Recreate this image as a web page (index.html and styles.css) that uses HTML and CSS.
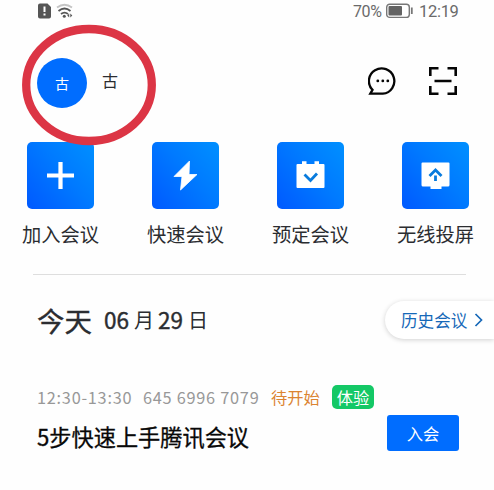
FILE: index.html
```html
<!DOCTYPE html>
<html lang="zh-CN">
<head>
<meta charset="utf-8">
<title>会议</title>
<link rel="stylesheet" href="styles.css">
</head>
<body>
<div class="status">
  <svg class="sim" width="14" height="16" viewBox="0 0 14 16"><path d="M2 .5h7.500L13 4v9.500a2 2 0 0 1-2 2H2a2 2 0 0 1-2-2v-11a2 2 0 0 1 2-2z" fill="#555"/><path d="M6.500 3.500v5.500M6.500 10.500v2" stroke="#fff" stroke-width="2"/></svg>
  <svg class="wifi" width="18" height="16" viewBox="0 0 18 16" fill="none"><path d="M1 4.500Q8.500-1 16 4.500" stroke="#c4c4c4" stroke-width="1.800"/><path d="M2.500 8Q8.500 3 14.500 8M5 11q3.500-2.700 7 0" stroke="#555" stroke-width="1.800"/><circle cx="8.300" cy="13.300" r="1.500" fill="#555"/><path d="m13.200 10.500-2 2 2 2zM14.300 10.500l2 2-2 2z" fill="#555"/></svg>
  <span class="percent">70%</span>
  <svg class="battery" width="28" height="16" viewBox="0 0 28 16"><rect x=".7" y="1.200" width="22.600" height="13.200" rx="3" fill="#fff" stroke="#777" stroke-width="1.400"/><rect x="2.500" y="3" width="13.500" height="9.600" rx="1" fill="#636363"/><path d="M25.800 4.500v6.500" stroke="#777" stroke-width="1.800"/></svg>
  <span class="clock">12:19</span>
</div>
<header class="header">
  <div class="avatar">古</div>
  <div class="username">古</div>
  <svg class="chat" width="30" height="30" viewBox="0 0 30 30"><path d="M2.300 27.700 4.500 23.900A12.700 12.700 0 1 1 14.800 27.700z" fill="none" stroke="#050505" stroke-width="2.300"/><g fill="#050505"><circle cx="9.800" cy="14.900" r="1.400"/><circle cx="14.800" cy="14.900" r="1.400"/><circle cx="19.800" cy="14.900" r="1.400"/></g></svg>
  <svg class="scan" width="30" height="30" viewBox="0 0 30 30" fill="none" stroke="#050505" stroke-width="2.600"><path d="M2.300 10V2.300H10.500M19.500 2.300h8.200V10M27.700 20v7.700h-8.200M10.500 27.700H2.300V20M6.500 15h17"/></svg>
  <svg class="mark" width="138" height="124" viewBox="0 0 138 124"><ellipse cx="69" cy="62" rx="62.800" ry="56" fill="none" stroke="#dc3545" stroke-width="8.300"/></svg>
</header>
<nav class="actions">
  <div class="action"><div class="tile"><svg width="67" height="67" viewBox="0 0 67 67"><path d="M33.500 20v27M20 33.500h27" stroke="#fff" stroke-width="4.200"/></svg></div><span>加入会议</span></div>
  <div class="action"><div class="tile"><svg width="67" height="67" viewBox="0 0 67 67"><path d="M37.500 19 22 34.500h8L28.500 48 45 32.500h-8z" fill="#fff" stroke="#fff" stroke-width=".8"/></svg></div><span>快速会议</span></div>
  <div class="action"><div class="tile"><svg width="67" height="67" viewBox="0 0 67 67"><path d="M20.500 22H25v-2.700h4.500V22h8v-2.700H42V22h4.500q1 0 1 1v22q0 1-1 1h-26q-1 0-1-1V23q0-1 1-1z" fill="#fff"/><path d="m27.500 32.500 6 6 6.500-7" fill="none" stroke="#087bdd" stroke-width="2.800"/></svg></div><span>预定会议</span></div>
  <div class="action"><div class="tile"><svg width="67" height="67" viewBox="0 0 67 67"><path d="M20.500 20.500h26q1 0 1 1V43q0 1.500-1.500 1.500h-6.500V47h-11v-2.500h-7.500q-1.500 0-1.500-1.500V21.500q0-1 1-1z" fill="#fff"/><path d="m27.500 34 6-6 6 6M33.500 33.500V39" fill="none" stroke="#087bdd" stroke-width="2.800"/></svg></div><span>无线投屏</span></div>
</nav>
<main>
  <section class="day">
    <h1>今天</h1>
    <div class="date"><b>06</b><span>月</span><b>29</b><span>日</span></div>
    <a class="history">历史会议<svg width="10" height="14" viewBox="0 0 10 14"><path d="m1.500 1 6 6-6 6" fill="none" stroke="#1668b8" stroke-width="1.700"/></svg></a>
  </section>
  <section class="meeting">
    <div class="meta"><span class="time">12:30-13:30</span><span class="number">645 6996 7079</span><span class="state">待开始</span><span class="tag">体验</span></div>
    <div class="entry"><h2>5步快速上手腾讯会议</h2><a class="join">入会</a></div>
  </section>
</main>
</body>
</html>
```
FILE: styles.css
```css
* { box-sizing: border-box; }
body {
  margin: 0;
  width: 494px;
  height: 490px;
  overflow: hidden;
  background: #fefefe;
  color: #2b2d31;
  font-family: "Noto Sans CJK SC", sans-serif;
  white-space: nowrap;
}
svg { display: block; flex: none; }
h1, h2 { margin: 0; font-weight: 400; -webkit-text-stroke: .3px currentColor; }

.status {
  display: flex;
  align-items: center;
  height: 24px;
  padding: 0 35px 2px 38px;
  color: #6a6a6a;
  font-family: Roboto, sans-serif;
  font-size: 16.5px;
}
.wifi { margin-left: 4px; }
.percent { margin-left: auto; width: 29px; font-size: 16px; letter-spacing: -.4px; }
.battery { margin-left: 4px; }
.clock { width: 40px; margin-left: 5px; letter-spacing: -.3px; }

.header {
  position: relative;
  display: flex;
  align-items: center;
  height: 118px;
  padding: 0 36px 0 37px;
}
.avatar {
  width: 50px;
  height: 50px;
  border-radius: 50%;
  background: #006dff;
  color: #fff;
  font-size: 14px;
  line-height: 50px;
  text-align: center;
}
.username { margin: -7px auto 0 15px; font-size: 16px; }
.scan { margin-left: 30px; }
.chat, .scan { margin-top: -4px; }
.mark { position: absolute; z-index: 1; left: 20px; top: -1px; }

.actions {
  display: grid;
  grid-template-columns: repeat(4, 125px);
  margin-left: -2px;
  height: 132px;
}
.action {
  display: flex;
  flex-direction: column;
  align-items: center;
  font-size: 19.3px;
  line-height: 28px;
}
.action span { margin-top: 11px; }
.tile {
  width: 67px;
  height: 67px;
  border-radius: 5px;
  background: linear-gradient(50deg, #0059ff, #007aff 55%, #0090ff);
}

main { margin: 0 0 0 33px; }
.day {
  display: flex;
  align-items: center;
  height: 92px;
  padding-left: 4px;
  position: relative;
}
.day::before {
  content: "";
  position: absolute;
  left: 0;
  top: 0;
  width: 433px;
  height: 1px;
  background: #dedede;
}
.day h1 { font-size: 27.5px; line-height: 40px; }
.date { display: flex; align-items: center; margin-left: 12px; font-size: 20px; line-height: 30px; }
.date b { width: 26px; font-size: 22.5px; margin-top: -2px; font-weight: 400; -webkit-text-stroke: .4px currentColor; }
.date span { width: 20px; margin: 0 4px; }
.history {
  display: flex;
  align-items: center;
  width: 109px;
  height: 38px;
  margin-left: auto;
  padding-left: 16px;
  border-radius: 19px 0 0 19px;
  background: #fff;
  box-shadow: 0 1px 5px rgba(0, 0, 0, .18);
  color: #1668b8;
  font-size: 16.6px;
}
.history svg { margin-left: 7px; }

.meeting { padding: 17px 35px 0 4px; }
.meta { display: flex; align-items: center; height: 27px; color: #989898; font-size: 16.3px; }
.time { width: 106px; letter-spacing: .75px; }
.number { width: 128px; letter-spacing: .75px; }
.state { width: 61px; color: #db8431; }
.tag {
  width: 42px;
  height: 24px;
  border-radius: 5px;
  background: #14c866;
  color: #fff;
  font-size: 16.3px;
  line-height: 24px;
  text-align: center;
}
.entry { display: flex; align-items: center; justify-content: space-between; height: 46px; }
.entry h2 { color: #080808; font-size: 22.2px; line-height: 34px; padding-top: 5px; }
.join {
  width: 72px;
  height: 36px;
  border-radius: 3px;
  background: #006dff;
  color: #fff;
  font-size: 16.3px;
  line-height: 36px;
  text-align: center;
}
```
